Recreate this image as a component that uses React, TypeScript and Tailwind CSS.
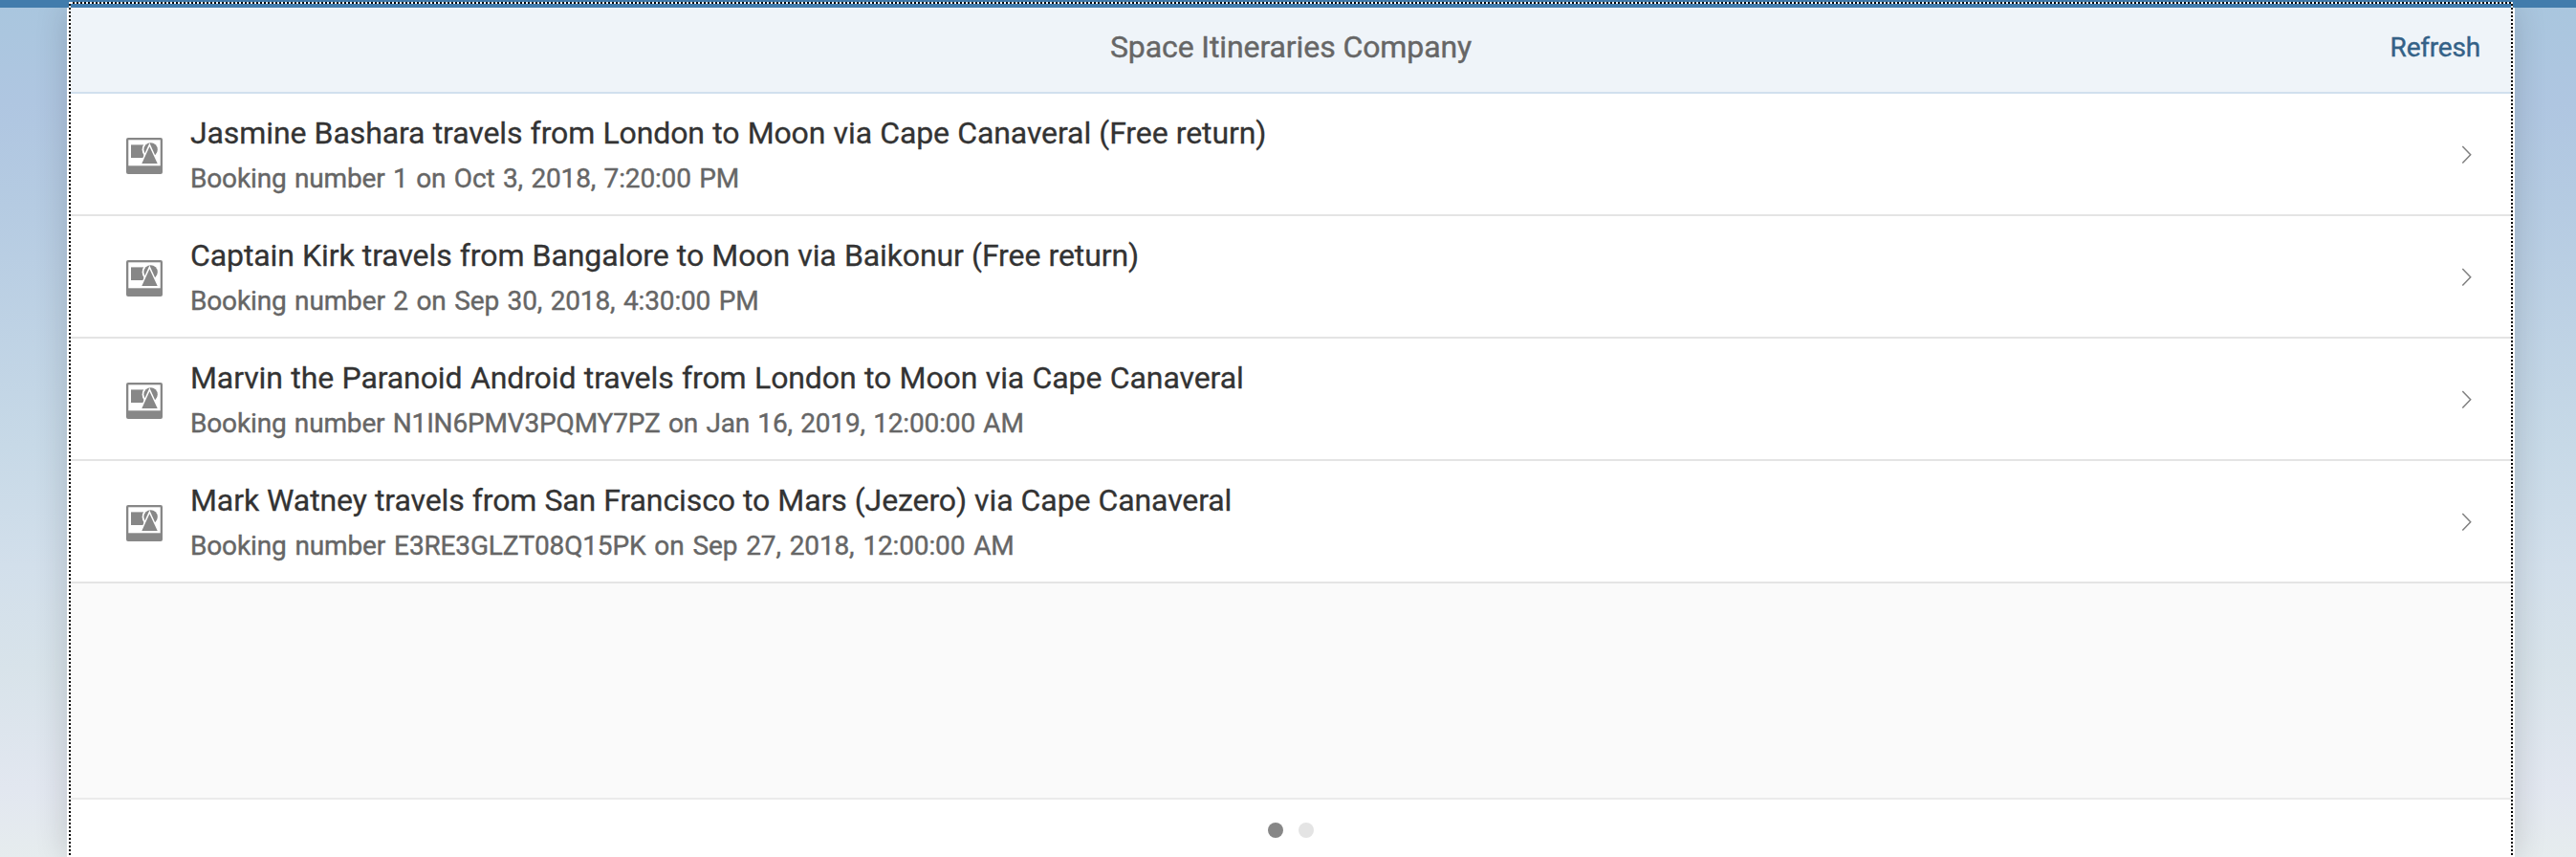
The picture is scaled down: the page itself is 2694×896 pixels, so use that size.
const bookings = [
  {
    title: "Jasmine Bashara travels from London to Moon via Cape Canaveral (Free return)",
    titleSpacing: "tracking-[-0.1px] [word-spacing:0.4px]",
    info: "Booking number 1 on Oct 3, 2018, 7:20:00 PM",
    infoSpacing: "tracking-[-0.15px] [word-spacing:1.7px]",
  },
  {
    title: "Captain Kirk travels from Bangalore to Moon via Baikonur (Free return)",
    titleSpacing: "tracking-[-0.1px] [word-spacing:0.4px]",
    info: "Booking number 2 on Sep 30, 2018, 4:30:00 PM",
    infoSpacing: "tracking-[-0.15px] [word-spacing:1.8px]",
  },
  {
    title: "Marvin the Paranoid Android travels from London to Moon via Cape Canaveral",
    titleSpacing: "tracking-[-0.1px] [word-spacing:0.6px]",
    info: "Booking number N1IN6PMV3PQMY7PZ on Jan 16, 2019, 12:00:00 AM",
    infoSpacing: "tracking-[-0.15px] [word-spacing:1.5px]",
  },
  {
    title: "Mark Watney travels from San Francisco to Mars (Jezero) via Cape Canaveral",
    titleSpacing: "tracking-[-0.1px] [word-spacing:0.25px]",
    info: "Booking number E3RE3GLZT08Q15PK on Sep 27, 2018, 12:00:00 AM",
    infoSpacing: "tracking-[-0.15px] [word-spacing:2.2px]",
  },
];

function PictureIcon() {
  return (
    <svg className="mt-[46px] size-[38px] shrink-0" viewBox="0 0 38 38">
      <rect width="38" height="38" rx="2" fill="#878787" />
      <rect x="2.3" y="2.3" width="33.4" height="27" fill="#fff" />
      <rect x="5" y="7.4" width="13.4" height="13.6" fill="#878787" />
      <circle cx="25.6" cy="12.4" r="9" fill="#fff" />
      <circle cx="25.6" cy="12.4" r="7.2" fill="#878787" />
      <path d="M24.4 5.4 34.8 28.5H14z" fill="#fff" />
      <path d="M24.4 9.2 32.7 27H16.3z" fill="#878787" />
    </svg>
  );
}

function Chevron() {
  return (
    <svg className="mt-[54px] h-5 w-3 shrink-0" viewBox="0 0 12 20" fill="none">
      <path d="M1.3 1 9.7 9.7 1.3 18.4" stroke="#808080" strokeWidth="1.5" />
    </svg>
  );
}

type Booking = (typeof bookings)[number];

function BookingRow({ title, titleSpacing, info, infoSpacing }: Booking) {
  return (
    <li className="flex h-32 border-b-2 border-[#e4e4e4] bg-white pr-[40px] pl-[58px]">
      <PictureIcon />
      <div className="flex flex-1 flex-col gap-[10px] pt-[21px] pl-[29px]">
        <div className={`h-10 text-[32px] leading-10 whitespace-nowrap text-[#333] [-webkit-text-stroke:0.3px_#333] ${titleSpacing}`}>
          {title}
        </div>
        <div className={`h-9 text-[28px] leading-9 whitespace-nowrap text-[#666] [-webkit-text-stroke:0.4px_#666] ${infoSpacing}`}>
          {info}
        </div>
      </div>
      <Chevron />
    </li>
  );
}

export default function App() {
  return (
    <div className="relative flex h-[896px] w-[2694px] flex-col overflow-hidden bg-[linear-gradient(to_bottom,#a9c6de_0%,#afc6e1_12%,#b5cbe2_24%,#c7d9e7_52%,#d2dfeb_66%,#d8e3ea_78%,#e2e7f0_92%,#e6ecee_100%)] font-['Roboto',sans-serif]">
      <div className="z-10 h-2 shrink-0 bg-[#427cac]" />
      <main className="ml-[70px] flex w-[2560px] flex-1 flex-col border-x-2 border-white bg-white px-[2px] shadow-[0_0_32px_rgba(0,0,0,0.16)]">
        <header className="grid h-[90px] shrink-0 grid-cols-3 items-center border-b-2 border-[#d1e0ee] bg-[#eff4f9] px-[32px] pb-[7px]">
          <h1 className="col-start-2 text-center text-[32px] leading-10 tracking-[-0.1px] text-[#666] [-webkit-text-stroke:0.4px_#666]">
            Space Itineraries Company
          </h1>
          <button className="justify-self-end pt-[3px] text-[28px] leading-9 tracking-[-0.2px] text-[#346187] [-webkit-text-stroke:0.4px_#346187]">
            Refresh
          </button>
        </header>
        <ul className="shrink-0">
          {bookings.map((b) => (
            <BookingRow key={b.title} {...b} />
          ))}
        </ul>
        <div className="flex-1 bg-[#fafafa]" />
        <footer className="flex h-[62px] shrink-0 justify-center gap-4 border-t-2 border-[#ebebeb] bg-white pt-6">
          <span className="size-4 rounded-full bg-[#878787]" />
          <span className="size-4 rounded-full bg-[#e4e4e4]" />
        </footer>
      </main>
      <div className="pointer-events-none absolute top-[2px] left-[72px] z-20 h-[2px] w-[2556px] bg-white pl-1">
        <div className="h-full bg-[repeating-linear-gradient(to_right,#000_0_2px,#fff_2px_4px)]" />
      </div>
      <div className="pointer-events-none absolute top-[4px] left-[72px] z-20 h-[892px] w-[2px] bg-[repeating-linear-gradient(to_bottom,#000_0_2px,#fff_2px_4px)]" />
      <div className="pointer-events-none absolute top-[4px] left-[2626px] z-20 h-[892px] w-[2px] bg-[repeating-linear-gradient(to_bottom,#000_0_2px,#fff_2px_4px)]" />
    </div>
  );
}
